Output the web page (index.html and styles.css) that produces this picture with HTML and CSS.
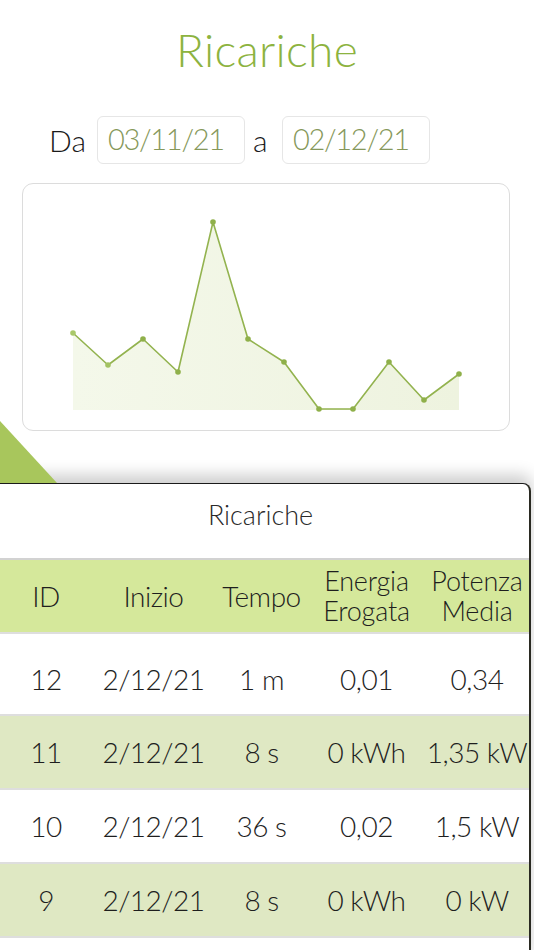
FILE: index.html
```html
<!DOCTYPE html>
<html lang="it">
<head>
<meta charset="utf-8">
<title>Ricariche</title>
<link rel="stylesheet" href="styles.css">
</head>
<body>
<div class="screen">
  <h1 class="title">Ricariche</h1>
  <div class="range">
    <span class="range-label">Da</span>
    <div class="date-box">03/11/21</div>
    <span class="range-label small">a</span>
    <div class="date-box">02/12/21</div>
  </div>
  <div class="chart-card">
    <svg class="chart" viewBox="23 184 486 246" width="486" height="246">
      <defs>
        <linearGradient id="fillg" x1="0" y1="0" x2="1" y2="0">
          <stop offset="0" stop-color="#f4f8ea"/>
          <stop offset="1" stop-color="#eef3df"/>
        </linearGradient>
      </defs>
      <polygon fill="url(#fillg)" points="73,333 108,365 143,339 178,372 213,222 248,339 284,362 319,409 353,409 389,362 424,400 459,374 459,410 73,410"/>
      <polyline fill="none" stroke="#93b34f" stroke-width="1.6" stroke-linejoin="round" points="73,333 108,365 143,339 178,372 213,222 248,339 284,362 319,409 353,409 389,362 424,400 459,374"/>
      <g fill="#8fb04a">
        <circle cx="73" cy="333" r="2.8" fill="#a9c86a"/>
        <circle cx="108" cy="365" r="2.8" fill="#a3c262"/>
        <circle cx="143" cy="339" r="2.8"/>
        <circle cx="178" cy="372" r="2.8"/>
        <circle cx="213" cy="222" r="2.8"/>
        <circle cx="248" cy="339" r="2.8"/>
        <circle cx="284" cy="362" r="2.8"/>
        <circle cx="319" cy="409" r="2.8"/>
        <circle cx="353" cy="409" r="2.8"/>
        <circle cx="389" cy="362" r="2.8"/>
        <circle cx="424" cy="400" r="2.8"/>
        <circle cx="459" cy="374" r="2.8"/>
      </g>
    </svg>
  </div>
  <div class="panel">
    <div class="panel-title">Ricariche</div>
    <div class="table">
      <div class="row head">
        <div class="cell">ID</div>
        <div class="cell">Inizio</div>
        <div class="cell">Tempo</div>
        <div class="cell two">Energia<br>Erogata</div>
        <div class="cell two">Potenza<br>Media</div>
      </div>
      <div class="row first">
        <div class="cell">12</div>
        <div class="cell">2/12/21</div>
        <div class="cell">1 m</div>
        <div class="cell">0,01</div>
        <div class="cell">0,34</div>
      </div>
      <div class="row alt">
        <div class="cell">11</div>
        <div class="cell">2/12/21</div>
        <div class="cell">8 s</div>
        <div class="cell">0 kWh</div>
        <div class="cell">1,35 kW</div>
      </div>
      <div class="row">
        <div class="cell">10</div>
        <div class="cell">2/12/21</div>
        <div class="cell">36 s</div>
        <div class="cell">0,02</div>
        <div class="cell">1,5 kW</div>
      </div>
      <div class="row alt">
        <div class="cell">9</div>
        <div class="cell">2/12/21</div>
        <div class="cell">8 s</div>
        <div class="cell">0 kWh</div>
        <div class="cell">0 kW</div>
      </div>
      <div class="row"></div>
    </div>
  </div>
</div>
</body>
</html>
```

FILE: styles.css
```css
* { box-sizing: border-box; }
html, body { margin: 0; padding: 0; }
body {
  background: #fff;
  font-family: "Lato", "Open Sans", sans-serif;
  font-weight: 300;
  color: #1e1e1e;
}
.screen {
  width: 534px;
  height: 950px;
  overflow: hidden;
  position: relative;
  background: #fff;
  z-index: 0;
}
.title {
  margin: 0;
  padding-top: 21px;
  height: 107px;
  text-align: center;
  font-weight: 300;
  font-size: 46px;
  line-height: 58px;
  color: #8db33f;
  letter-spacing: 0.3px;
}
.range {
  display: flex;
  align-items: center;
  padding-left: 49px;
  height: 54px;
  margin-top: 6px;
}
.range-label {
  font-size: 30px;
  color: #1a1a1a;
  width: 48px;
}
.range-label.small { width: 37px; padding-left: 8px; }
.date-box {
  width: 148px;
  height: 48px;
  border: 1px solid #e6e6e6;
  border-radius: 6px;
  padding-left: 10px;
  font-size: 29px;
  line-height: 44px;
  letter-spacing: -1.3px;
  color: #86985a;
}
.chart-card {
  margin: 16px 24px 0 22px;
  height: 248px;
  border: 1px solid #dcdcdc;
  border-radius: 11px;
  overflow: hidden;
}
.chart { display: block; }
.panel {
  position: relative;
  z-index: 1;
  margin-top: 52px;
  width: 531px;
  background: #fff;
  border-top: 1.5px solid #1a1a1a;
  border-right: 2px solid #2a2a22;
  border-top-right-radius: 8px;
  box-shadow: 0 -8px 16px rgba(0, 0, 0, 0.2);
  height: 480px;
}
.panel::before {
  content: "";
  position: absolute;
  left: 0;
  top: -63px;
  width: 57px;
  height: 62px;
  background: #a8c65c;
  clip-path: polygon(0 0, 0 100%, 100% 100%);
  z-index: -1;
}
.panel-title {
  height: 74px;
  text-align: center;
  font-size: 27px;
  line-height: 62px;
  color: #2a2a2a;
  padding-right: 8px;
}
.table { display: flex; flex-direction: column; }
.row {
  display: grid;
  grid-template-columns: 92px 123px 93px 117px 104px;
  align-items: center;
  height: 74px;
  border-bottom: 2px solid #dedede;
  font-size: 28px;
  color: #1e1e1e;
}
.row.head {
  background: #d5e89b;
  border-top: 2px solid #d2d2d2;
  height: 76px;
}
.row.first { height: 82px; padding-top: 10px; }
.row.alt { background: #dfe8c3; }
.cell { text-align: center; white-space: nowrap; letter-spacing: -0.5px; }
.cell.two { font-size: 27px; line-height: 30px; letter-spacing: -0.2px; }
```
